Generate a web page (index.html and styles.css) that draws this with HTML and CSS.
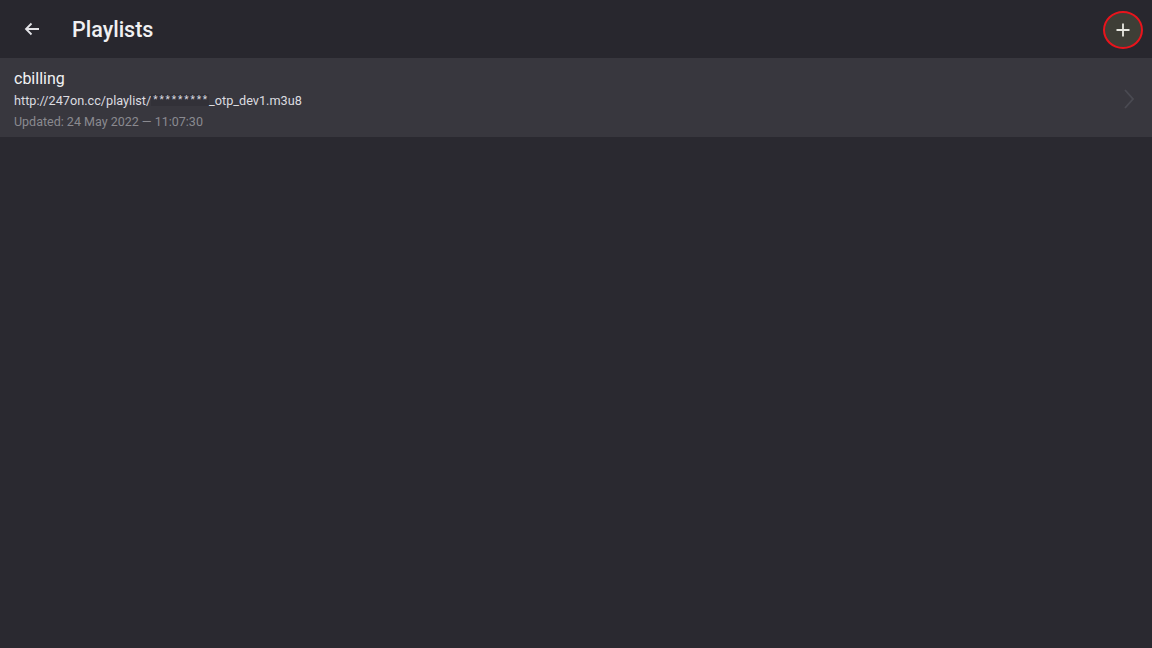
FILE: index.html
```html
<!DOCTYPE html>
<html lang="en">
    <head>
        <title>Playlists</title>
        <meta charset="utf-8">
        <meta name="viewport" content="width=device-width, initial-scale=1">
        <link rel="stylesheet" href="styles.css">
    </head>
    <body>
        <div class="topbar">
            <span class="back-btn">
                <svg width="18" height="18" viewBox="0 0 18 18"><path d="M16 9H3M8.5 3.5L3 9l5.5 5.5" fill="none" stroke="#e4e4e8" stroke-width="1.8"/></svg>
            </span>
            <h1 class="title">Playlists</h1>
            <span class="add-btn">
                <svg width="16" height="16" viewBox="0 0 16 16"><path d="M8 1.5v13M1.5 8h13" stroke="#e8e8e0" stroke-width="1.8"/></svg>
            </span>
        </div>
        <div class="playlist-list">
            <div class="playlist-item">
                <div class="item-text">
                    <div class="item-name">cbilling</div>
                    <div class="item-url">http://247on.cc/playlist/<span class="masked">*********</span>_otp_dev1.m3u8</div>
                    <div class="item-date">Updated: 24 May 2022 — 11:07:30</div>
                </div>
                <svg class="chevron" width="12" height="22" viewBox="0 0 12 22"><path d="M2 2l8 9-8 9" fill="none" stroke="#4a4a52" stroke-width="1.8"/></svg>
            </div>
        </div>
    </body>
</html>
```

FILE: styles.css
```css
html, body {
margin: 0;
padding: 0;
}
body {
background-color: #2a2930;
font-family: Roboto, "Noto Sans", sans-serif;
color: #ececf0;
width: 1152px;
height: 648px;
overflow: hidden;
}
.topbar {
display: flex;
align-items: center;
height: 58px;
background-color: #28272e;
}
.back-btn {
display: flex;
width: 18px;
height: 18px;
margin-left: 23px;
}
.title {
margin: 0 0 0 31px;
font-size: 21.5px;
font-weight: 500;
color: #f0f0f2;
flex: 1;
}
.add-btn {
display: flex;
align-items: center;
justify-content: center;
width: 36px;
height: 34px;
margin-right: 9px;
margin-top: 1px;
border: 2px solid #e8141c;
border-radius: 50%;
background-color: #3e3e36;
}
.playlist-item {
display: flex;
align-items: center;
height: 79px;
background-color: #38373e;
padding: 0 17px 0 14px;
}
.item-text {
flex: 1;
}
.item-name {
font-size: 16px;
line-height: 20px;
color: #f2f2f4;
margin-top: 3px;
}
.item-url {
font-size: 12.7px;
line-height: 16px;
color: #dcdce0;
margin-top: 4px;
}
.masked {
display: inline-block;
background-color: #323138;
font-size: 10px;
letter-spacing: 1.9px;
padding: 0 0 0 2px;
vertical-align: 2px;
line-height: 12px;
}
.item-date {
font-size: 12.5px;
line-height: 16px;
color: #8a8a90;
margin-top: 5px;
}
.chevron {
margin-top: 2px;
}
```
